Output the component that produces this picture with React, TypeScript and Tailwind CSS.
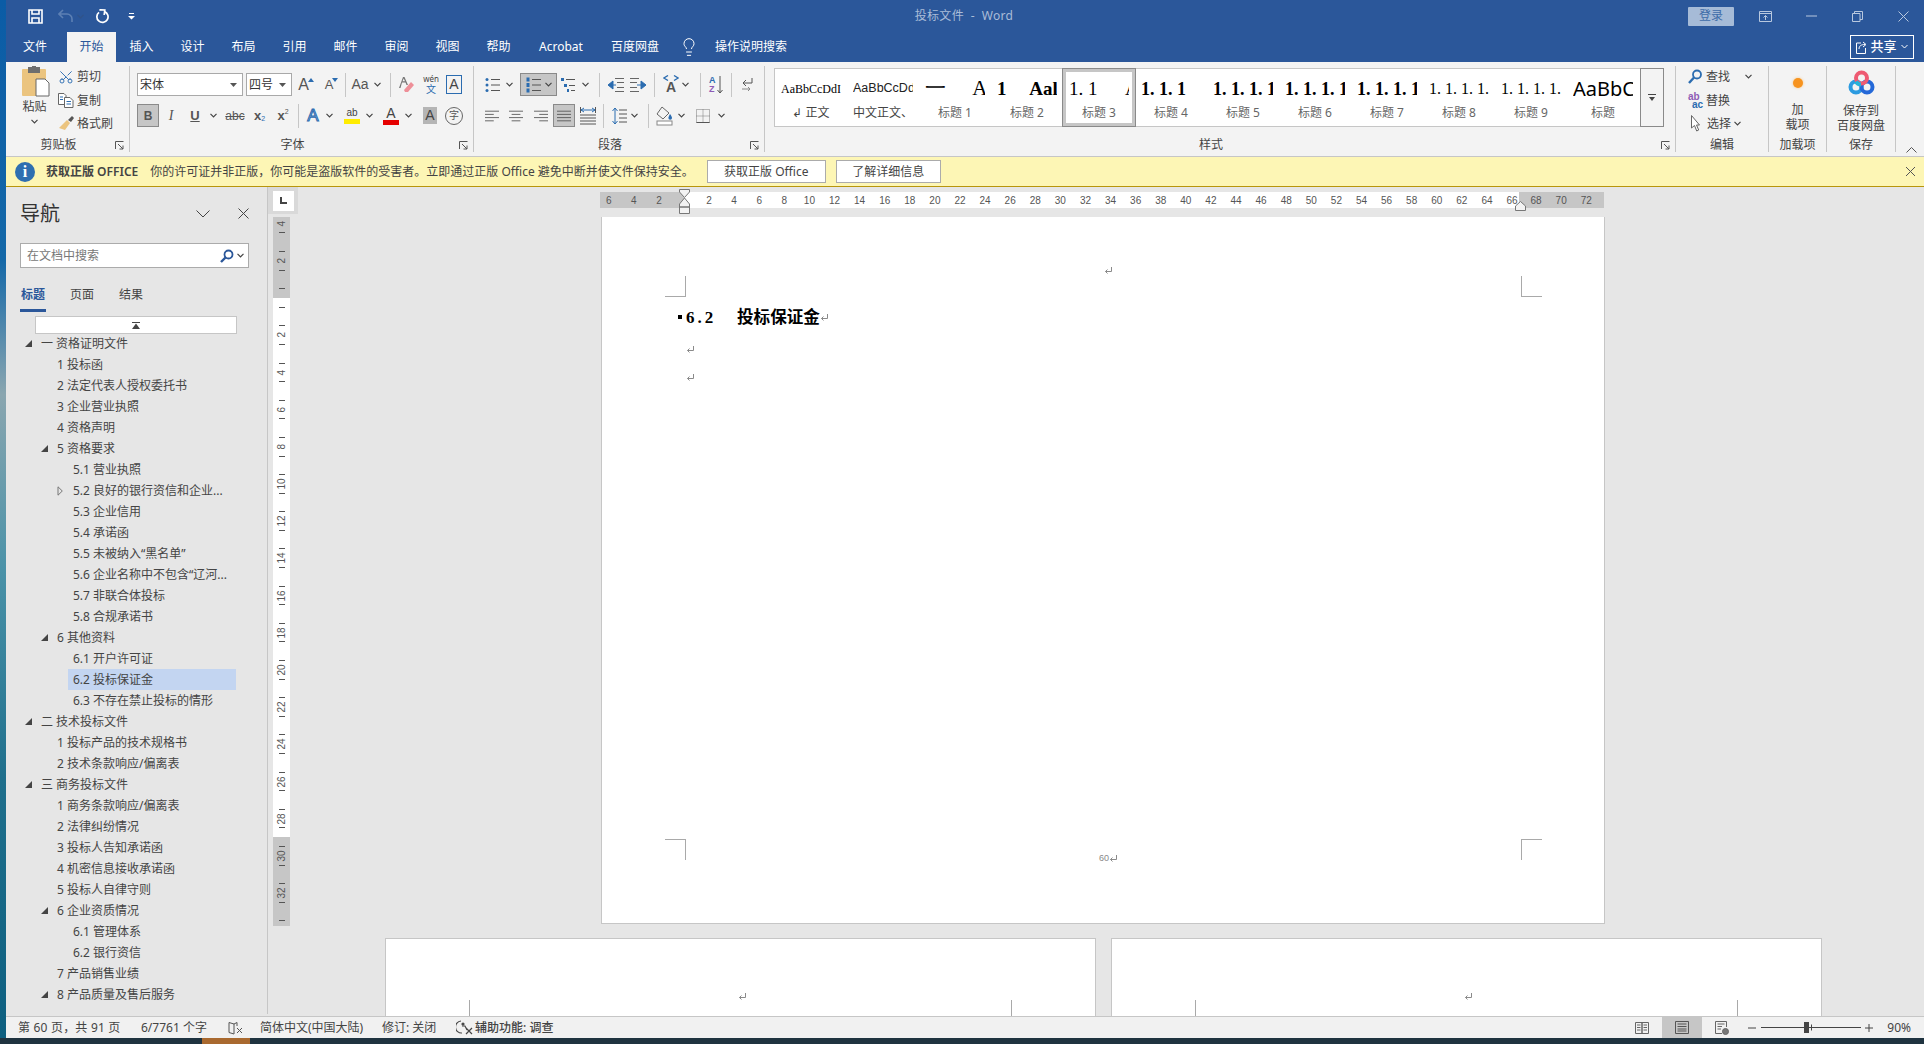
import React from 'react';
import { Scissors, Lightbulb } from 'lucide-react';

const chev = 'flex shrink-0 items-center justify-center';

function Chevron({ className = '' }: { className?: string }) {
  return (
    <span className={`${chev} ${className}`}>
      <svg width="7" height="5" viewBox="0 0 7 5" fill="none" stroke="#444" strokeWidth="1.2">
        <path d="M0.5 0.8 3.5 3.8 6.5 0.8" />
      </svg>
    </span>
  );
}

function Sep({ className = '' }: { className?: string }) {
  return <span className={`h-[24px] w-px shrink-0 bg-[#c6c6c6] ${className}`} />;
}

// four-line paragraph icon, used for align buttons and lists
function Lines({ rows, className = '' }: { rows: [number, number][]; className?: string }) {
  return (
    <svg className={`shrink-0 ${className}`} width="16" height="14" viewBox="0 0 16 14" stroke="#555">
      {rows.map(([a, b], i) => (
        <path key={i} d={`M${a} ${1.5 + i * (11 / (rows.length - 1))}H${b}`} />
      ))}
    </svg>
  );
}

function Launcher() {
  return (
    <svg className="shrink-0" width="9" height="9" viewBox="0 0 9 9" fill="none" stroke="#555">
      <path d="M0.5 8V0.5H8.5M3 3 8 8M8 4.5V8H4.5" />
    </svg>
  );
}

function Group({ className, label, launcher, children }: { className: string; label: string; launcher?: boolean; children: React.ReactNode }) {
  return (
    <div className={`mt-[4px] flex h-[86px] shrink-0 flex-col border-r border-[#c6c6c6] ${className}`}>
      <div className="h-[70px] shrink-0">{children}</div>
      <div className="flex h-[16px] items-center pt-[2px] text-[12px] text-[#444]">
        <span className="flex-1 text-center">{label}</span>
        {launcher && (
          <span className="flex w-[18px] justify-center pr-[2px]">
            <Launcher />
          </span>
        )}
      </div>
    </div>
  );
}

function BlueUp({ down }: { down?: boolean }) {
  return (
    <svg className="mb-[9px] -ml-[1px]" width="6" height="4" viewBox="0 0 6 4" fill="#2b6cb0">
      <path d={down ? 'M0 0H6L3 4Z' : 'M3 0 6 4H0Z'} />
    </svg>
  );
}

function FontGroup() {
  const cell = 'flex shrink-0 items-center justify-center h-[23px] text-[#555]';
  const sans = "font-['Liberation_Sans',sans-serif]";
  return (
    <Group className="w-[344px]" label="字体" launcher>
      <div className="mt-[7px] flex h-[23px] items-center pl-[7px]">
        <div className="flex h-[23px] w-[106px] shrink-0 items-center justify-between border border-[#a9a9a9] bg-white pl-[2px] pr-[5px] text-[12px] text-[#333]">
          宋体
          <svg width="7" height="4" viewBox="0 0 7 4" fill="#555"><path d="M0 0H7L3.5 4Z" /></svg>
        </div>
        <div className="ml-[3px] flex h-[23px] w-[46px] shrink-0 items-center justify-between border border-[#a9a9a9] bg-white pl-[2px] pr-[5px] text-[12px] text-[#333]">
          四号
          <svg width="7" height="4" viewBox="0 0 7 4" fill="#555"><path d="M0 0H7L3.5 4Z" /></svg>
        </div>
        <span className={`${cell} ${sans} w-[28px] text-[16px]`}>A<BlueUp /></span>
        <span className={`${cell} ${sans} w-[23px] text-[13px]`}>A<BlueUp down /></span>
        <Sep className="ml-[2px]" />
        <span className={`${cell} ${sans} ml-[2px] w-[24px] text-[14px]`}>Aa</span>
        <Chevron className="w-[10px]" />
        <Sep className="ml-[8px]" />
        <span className={`${cell} ml-[3px] w-[24px]`}>
          <svg width="17" height="17" viewBox="0 0 17 17">
            <path d="M1 12 5 1H6.500L10 9H8.500L7.500 6.500H4L2.500 12ZM4.500 5.300H7L5.700 2.500Z" fill="#777" />
            <path d="M6 14 13 6l3 3-6 7H7Z" fill="#ee8f98" />
          </svg>
        </span>
        <span className={`${cell} ml-[1px] w-[24px] flex-col`}>
          <span className="h-[10px] text-[8px] leading-[10px] text-[#444]">wén</span>
          <span className="h-[11px] text-[10px] leading-[11px] text-[#2b6cb0]">文</span>
        </span>
        <span className={`ml-[3px] flex h-[19px] w-[16px] shrink-0 items-center justify-center border border-[#2b6cb0] ${sans} text-[14px] text-[#444]`}>A</span>
      </div>
      <div className="mt-[8px] flex h-[23px] items-center pl-[7px]">
        <span className={`${cell} ${sans} w-[22px] border border-[#8a8a8a] bg-[#c6c6c6] text-[12px] font-bold text-[#444]`}>B</span>
        <span className={`${cell} w-[24px] font-['Liberation_Serif',serif] text-[14px] italic`}>I</span>
        <span className={`${cell} ${sans} w-[24px] text-[13px] font-bold underline`}>U</span>
        <Chevron className="w-[12px]" />
        <span className={`${cell} ${sans} ml-[3px] w-[26px] text-[12px] line-through`}>abc</span>
        <span className={`${cell} ${sans} w-[23px] text-[13px] font-bold`}>x<span className="mt-[7px] text-[7px] font-normal text-[#2b6cb0]">2</span></span>
        <span className={`${cell} ${sans} w-[24px] text-[13px] font-bold`}>x<span className="mb-[7px] text-[7px] font-normal text-[#555]">2</span></span>
        <Sep className="ml-[3px]" />
        <span className={`${cell} ${sans} ml-[2px] w-[24px] text-[17px] text-[#bcd6ee] [-webkit-text-stroke:1px_#2b6cb0]`}>A</span>
        <Chevron className="w-[8px]" />
        <span className={`${cell} ml-[7px] w-[24px] flex-col`}>
          <span className={`${sans} text-[10px] leading-[12px] text-[#444]`}>ab</span>
          <span className="h-[5px] w-[16px] bg-[#ffec00]" />
        </span>
        <Chevron className="ml-[1px] w-[8px]" />
        <span className={`${cell} ml-[7px] w-[22px] flex-col`}>
          <span className={`${sans} text-[14px] leading-[14px] text-[#444]`}>A</span>
          <span className="h-[5px] w-[16px] bg-[#e50000]" />
        </span>
        <Chevron className="ml-[2px] w-[8px]" />
        <span className={`${cell} ml-[7px] w-[22px]`}>
          <span className={`${sans} flex h-[17px] w-[14px] items-center justify-center bg-[#b5b5b5] text-[14px] text-[#444]`}>A</span>
        </span>
        <span className={`${cell} ml-[2px] w-[22px]`}>
          <span className="flex h-[18px] w-[18px] items-center justify-center rounded-full border border-[#666] text-[10px] text-[#555]">字</span>
        </span>
      </div>
    </Group>
  );
}

function Bullets({ numbered, className = '' }: { numbered?: boolean; className?: string }) {
  return (
    <svg className={`shrink-0 ${className}`} width="15" height="16" viewBox="0 0 15 16" stroke="#555">
      {[2.5, 8, 13.5].map((y) => (
        <g key={y}>
          {numbered ? <rect x="0.5" y={y - 2} width="3" height="4" fill="#2b6cb0" stroke="none" /> : <circle cx="2" cy={y} r="1.5" fill="#2b6cb0" stroke="none" />}
          <path d={`M6 ${y}H15`} />
        </g>
      ))}
    </svg>
  );
}

function ParagraphGroup() {
  return (
    <Group className="w-[291px]" label="段落" launcher>
      <div className="mt-[7px] flex h-[23px] items-center pl-[11px]">
        <Bullets />
        <Chevron className="ml-[4px] w-[10px]" />
        <div className="ml-[6px] flex h-[23px] w-[37px] shrink-0 items-center justify-center gap-[4px] border border-[#8a8a8a] bg-[#c6c6c6]">
          <Bullets numbered />
          <Chevron className="w-[7px]" />
        </div>
        <svg className="ml-[4px] shrink-0" width="14" height="16" viewBox="0 0 14 16" stroke="#555">
          <rect x="0" y="1" width="3" height="3" fill="#2b6cb0" stroke="none" />
          <path d="M5 2.5H14" />
          <rect x="3" y="7" width="3" height="3" fill="#2b6cb0" stroke="none" />
          <path d="M8 8.5H14" />
          <rect x="6" y="12" width="2" height="3" fill="#2b6cb0" stroke="none" />
          <path d="M10 13.5H14" />
        </svg>
        <Chevron className="ml-[5px] w-[10px]" />
        <Sep className="ml-[9px]" />
        <svg className="ml-[7px] shrink-0" width="17" height="14" viewBox="0 0 17 14">
          <path d="M6 3 1 7l5 4zM5 7H9" fill="#2b6cb0" stroke="#2b6cb0" />
          <path d="M8 .5H17M10 4.5H17M10 9.5H17M8 13.5H17" stroke="#666" />
        </svg>
        <svg className="ml-[6px] shrink-0" width="16" height="14" viewBox="0 0 16 14">
          <path d="M11 3l5 4-5 4zM7 7H12" fill="#2b6cb0" stroke="#2b6cb0" />
          <path d="M0 .5H9M0 4.5H7M0 9.5H7M0 13.5H9" stroke="#666" />
        </svg>
        <Sep className="ml-[8px]" />
        <span className="ml-[8px] flex h-[23px] w-[16px] shrink-0 flex-col items-center justify-center">
          <svg width="16" height="6" viewBox="0 0 16 6" fill="none" stroke="#2b6cb0" strokeWidth="1.3"><path d="M5 .5 1 3l4 2.5M11 .5 15 3l-4 2.5" /></svg>
          <span className="font-['Liberation_Sans',sans-serif] text-[14px] font-bold leading-[13px] text-[#555]">A</span>
        </span>
        <Chevron className="ml-[1px] w-[10px]" />
        <Sep className="ml-[10px]" />
        <span className="ml-[8px] flex h-[23px] w-[16px] shrink-0 items-center">
          <span className="flex flex-col font-['Liberation_Sans',sans-serif] text-[9px] font-bold leading-[9px]">
            <span className="text-[#2b6cb0]">A</span>
            <span className="text-[#8e5bb5]">Z</span>
          </span>
          <svg className="ml-[1px]" width="6" height="18" viewBox="0 0 6 18" fill="none" stroke="#555"><path d="M3 0V17M.5 14 3 17l2.5-3" /></svg>
        </span>
        <Sep className="ml-[6px]" />
        <svg className="ml-[9px] shrink-0" width="12" height="16" viewBox="0 0 12 16" fill="none" stroke="#555">
          <path d="M11 1V6H2M5 3 2 6l3 3" />
          <path d="M1 12H9M7 10l2 2-2 2" stroke="#888" />
        </svg>
      </div>
      <div className="mt-[8px] flex h-[23px] items-center pl-[11px]">
        <Lines className="w-[14px]" rows={[[0, 16], [0, 10], [0, 16], [0, 10]]} />
        <Lines className="ml-[10px] w-[14px]" rows={[[0, 16], [3, 13], [0, 16], [3, 13]]} />
        <Lines className="ml-[11px] w-[14px]" rows={[[0, 16], [6, 16], [0, 16], [6, 16]]} />
        <span className="ml-[5px] flex h-[23px] w-[22px] shrink-0 items-center justify-center border border-[#8a8a8a] bg-[#c6c6c6]">
          <Lines className="w-[14px]" rows={[[0, 16], [0, 16], [0, 16], [0, 16]]} />
        </span>
        <svg className="ml-[5px] shrink-0" width="16" height="18" viewBox="0 0 16 18" fill="none" stroke="#555">
          <path d="M4 1 1 3l3 2M12 1l3 2-3 2M1 3H15" stroke="#2b6cb0" />
          <path d="M0 8H16M0 11H16M0 14H16M0 17H16M.5 0V6M15.5 0V6" />
        </svg>
        <Sep className="ml-[7px]" />
        <svg className="ml-[8px] shrink-0" width="15" height="18" viewBox="0 0 15 18" fill="none">
          <path d="M3 1V17M.5 4 3 1l2.5 3M.5 14 3 17l2.5-3" stroke="#2b6cb0" />
          <path d="M7 3H15M7 7H15M7 11H15M7 15H15" stroke="#555" />
        </svg>
        <Chevron className="ml-[2px] w-[10px]" />
        <Sep className="ml-[9px]" />
        <svg className="ml-[7px] shrink-0" width="17" height="20" viewBox="0 0 17 20" fill="none">
          <path d="M6 1 1 8l6 5 6-6z" stroke="#666" />
          <path d="M14 8c1.5 2 2 3 2 4a1.8 1.8 0 0 1-3.6 0c0-1 .6-2 1.6-4Z" fill="#2b6cb0" />
          <rect x="1" y="15" width="15" height="4" fill="#fff" stroke="#888" />
        </svg>
        <Chevron className="ml-[3px] w-[10px]" />
        <svg className="ml-[10px] shrink-0" width="14" height="14" viewBox="0 0 14 14" fill="none" stroke="#777" strokeDasharray="1 1">
          <path d="M.5 .5H13.5V13.5H.5ZM7 .5V13.5M.5 7H13.5" />
          <path d="M.5 13.5H13.5" strokeDasharray="none" stroke="#555" />
        </svg>
        <Chevron className="ml-[6px] w-[10px]" />
      </div>
    </Group>
  );
}

const serif = "font-['Liberation_Serif',serif]";
const styleItems = [
  { preview: 'AaBbCcDdI', cls: `${serif} text-[12px] text-black`, label: '↲ 正文', dark: true },
  { preview: 'AaBbCcDdI', cls: "font-['Liberation_Sans',sans-serif] text-[12.5px] text-[#222]", label: '中文正文、', dark: true },
  { preview: '一     A', cls: `${serif} text-[21px] text-black`, label: '标题 1' },
  { preview: '1     Aal', cls: `${serif} text-[19px] font-bold text-black`, label: '标题 2' },
  { preview: '1. 1      A', cls: `${serif} text-[19px] text-black`, label: '标题 3', selected: true },
  { preview: '1. 1. 1', cls: `${serif} text-[18px] font-bold text-black`, label: '标题 4' },
  { preview: '1. 1. 1. 1', cls: `${serif} text-[18px] font-bold text-black`, label: '标题 5' },
  { preview: '1. 1. 1. 1', cls: `${serif} text-[18px] font-bold text-black`, label: '标题 6' },
  { preview: '1. 1. 1. 1', cls: `${serif} text-[18px] font-bold text-black`, label: '标题 7' },
  { preview: '1. 1. 1. 1.', cls: `${serif} text-[16px] text-black`, label: '标题 8' },
  { preview: '1. 1. 1. 1.', cls: `${serif} text-[16px] text-black`, label: '标题 9' },
  { preview: 'AaBbCc', cls: "font-['Noto_Sans',sans-serif] text-[20px] text-black", label: '标题' },
];

function StylesGroup() {
  return (
    <Group className="w-[911px]" label="样式" launcher>
      <div className="ml-[9px] mt-[2px] flex h-[59px] w-[890px] border border-[#c6c6c6] bg-white">
        {styleItems.map((s) => (
          <div
            key={s.label}
            className={`flex h-[57px] w-[72px] shrink-0 flex-col items-center ${s.selected ? 'border-[3px] border-[#c6c6c6] outline outline-1 outline-[#8a8a8a]' : ''}`}
          >
            <div className={`flex h-[33px] w-[60px] shrink-0 items-center overflow-hidden whitespace-pre leading-none ${s.selected ? '' : 'mt-[3px]'} ${s.cls}`}>
              {s.preview}
            </div>
            <div className={`text-[12px] leading-[16px] ${s.dark ? 'text-[#444]' : 'text-[#666]'}`}>{s.label}</div>
          </div>
        ))}
        <div className="ml-[1px] flex h-[59px] w-[24px] shrink-0 -translate-y-px items-center justify-center border border-[#8a8a8a] bg-[#f3f3f3]">
          <svg width="8" height="8" viewBox="0 0 8 8" fill="#444"><path d="M0 0H8V1H0ZM1 3H7L4 7Z" /></svg>
        </div>
      </div>
    </Group>
  );
}

function EditGroup() {
  const row = 'flex h-[23px] items-center text-[12px] text-[#444]';
  return (
    <Group className="w-[93px]" label="编辑">
      <div className="pl-[12px]">
        <div className={`${row} mt-[-1px]`}>
          <svg className="mr-[4px]" width="14" height="15" viewBox="0 0 14 15" fill="none" stroke="#2b6cb0" strokeWidth="1.8">
            <circle cx="9" cy="5.5" r="4" />
            <path d="M6 8.5 1 14" strokeWidth="2.4" />
          </svg>
          查找
          <Chevron className="ml-[15px] w-[7px]" />
        </div>
        <div className={`${row} mt-[1px]`}>
          <span className="mr-[3px] flex w-[15px] flex-col font-['Liberation_Sans',sans-serif] text-[10px] font-bold leading-[8px]">
            <span className="text-[#8e5bb5]">ab</span>
            <span className="ml-[4px] text-[#2b6cb0]">ac</span>
          </span>
          替换
        </div>
        <div className={row}>
          <svg className="mb-[1px] ml-[3px] mr-[7px]" width="9" height="17" viewBox="0 0 9 17" fill="#fff" stroke="#666">
            <path d="M.5 .5V13l3-2.5 2.2 5.5 2-1-2.2-5H8.5Z" />
          </svg>
          选择
          <Chevron className="ml-[2px] w-[8px]" />
        </div>
      </div>
    </Group>
  );
}

function BaiduIcon() {
  return (
    <svg width="27" height="26" viewBox="0 0 27 26" fill="none" strokeWidth="4">
      <circle cx="8" cy="17" r="5.5" stroke="#2c9be0" />
      <circle cx="19" cy="17" r="5.5" stroke="#2468d8" />
      <circle cx="13.5" cy="8" r="5.5" stroke="#ee5a72" />
      <path d="M8 11.5a5.5 5.5 0 0 0 5 3" stroke="#26b3d8" />
    </svg>
  );
}

function TitleBar() {
  return (
    <div className="flex h-[32px] shrink-0 items-center bg-[#2b579a]">
      <svg className="ml-[22px] shrink-0" width="15" height="15" viewBox="0 0 15 15" fill="none" stroke="#fff" strokeWidth="1.6">
        <path d="M1 1H14V14H1ZM4 1V5H11V1M4 14V9H11V14" />
      </svg>
      <svg className="ml-[15px] shrink-0" width="15" height="14" viewBox="0 0 15 14" fill="none" stroke="#5d80b4" strokeWidth="1.6">
        <path d="M5 1 1 5l4 4M1 5H9a5 5 0 0 1 5 5v3" />
      </svg>
      <Chevron className="ml-[3px] w-[8px] opacity-20" />
      <svg className="ml-[12px] shrink-0" width="14" height="15" viewBox="0 0 14 15" fill="none" stroke="#fff" strokeWidth="1.7">
        <path d="M8.5 2.6A5.6 5.6 0 1 1 3 3.4" />
        <path d="M3.4 .8 8.8 1 8.2 6" />
      </svg>
      <svg className="ml-[18px] shrink-0" width="7" height="7" viewBox="0 0 7 7" fill="#fff"><path d="M1 0H6V1H1ZM0 3H7L3.5 6.5Z" /></svg>
      <div className="ml-[776px] w-[106px] shrink-0 text-center text-[12px] tracking-[0.3px] text-[#a9bcd8]">投标文件&nbsp; -&nbsp; Word</div>
      <div className="ml-auto flex items-center">
        <div className="flex h-[19px] w-[46px] items-center justify-center rounded-[1px] bg-[#a6bbd7] text-[12px] text-[#3e6ca8]">登录</div>
        <svg className="ml-[25px]" width="13" height="11" viewBox="0 0 13 11" fill="none" stroke="#b8c8df">
          <path d="M.5 .5H12.5V10.5H.5ZM.5 2.5H12.5M6.5 9V4.5M4.5 6.5l2-2 2 2" />
        </svg>
        <svg className="ml-[34px]" width="11" height="2" viewBox="0 0 11 2" stroke="#b8c8df"><path d="M0 1H11" /></svg>
        <svg className="ml-[35px]" width="11" height="11" viewBox="0 0 11 11" fill="none" stroke="#b8c8df">
          <path d="M.5 2.5H8V10.5H.5ZM2.5 2.5V.5H10.5V8.5H8" />
        </svg>
        <svg className="ml-[35px] mr-[15px]" width="11" height="11" viewBox="0 0 11 11" fill="none" stroke="#b8c8df"><path d="M.5 .5 10.5 10.5M10.5 .5 .5 10.5" /></svg>
      </div>
    </div>
  );
}

function TabBar() {
  const tab = 'flex h-[30px] shrink-0 items-center justify-center text-[12px] text-white';
  const names = ['插入', '设计', '布局', '引用', '邮件', '审阅', '视图', '帮助'];
  return (
    <div className="flex h-[30px] shrink-0 items-center bg-[#2b579a]">
      <div className={`${tab} w-[61px] pr-[3px]`}>文件</div>
      <div className="flex h-[30px] w-[49px] shrink-0 items-center justify-center bg-[#f3f3f3] text-[12px] text-[#2b579a]">开始</div>
      {names.map((n) => (
        <div key={n} className={`${tab} w-[51px]`}>{n}</div>
      ))}
      <div className={`${tab} w-[74px]`}>Acrobat</div>
      <div className={`${tab} w-[74px]`}>百度网盘</div>
      <Lightbulb className="ml-[7px] shrink-0" size={20} color="#fff" strokeWidth={1.2} />
      <div className="ml-[16px] text-[12px] text-white">操作说明搜索</div>
      <div className="ml-auto mb-[1px] mr-[10px] flex h-[24px] w-[64px] items-center justify-center gap-[3px] border border-white text-[13px] font-medium text-white">
        <svg width="11" height="14" viewBox="0 0 11 14" fill="none" stroke="#fff">
          <path d="M5 3H.5V13.5H9.5V8M3 9c0-3 2-4.500 6-4.500M7 2l3 2.500-3 2.500" />
        </svg>
        共享
        <svg className="ml-[1px]" width="7" height="5" viewBox="0 0 7 5" fill="none" stroke="#fff"><path d="M.5 1 3.500 4 6.500 1" /></svg>
      </div>
    </div>
  );
}

function Ribbon() {
  return (
    <div className="relative flex h-[95px] shrink-0 border-b border-[#c6c6c6] bg-[#f3f3f3]">
      <Group className="w-[124px]" label="剪贴板" launcher>
        <div className="flex">
          <div className="ml-[5px] flex w-[47px] shrink-0 flex-col items-center text-[12px] text-[#444]">
            <svg className="ml-[3px]" width="28" height="31" viewBox="0 0 28 31">
              <rect x="0" y="3" width="24" height="27" rx="1" fill="#ebc47f" />
              <rect x="6" y="1" width="12" height="6" fill="#6e6e6e" />
              <rect x="10" y="0" width="4" height="3" fill="#6e6e6e" />
              <path d="M14 13H23L27 17V30H14Z" fill="#fff" stroke="#666" />
            </svg>
            <span className="mt-[2px] leading-[16px]">粘贴</span>
            <Chevron className="mt-[3px] h-[6px] w-[8px]" />
          </div>
          <div className="flex flex-col text-[12px] text-[#444]">
            <div className="flex h-[23px] items-center gap-[3px] mt-[-1px]">
              <span className="flex w-[16px] justify-center">
                <Scissors className="-rotate-90" size={16} color="#2b6cb0" strokeWidth={1.4} />
              </span>
              剪切
            </div>
            <div className="mt-[1px] flex h-[23px] items-center gap-[3px]">
              <svg width="16" height="15" viewBox="0 0 16 15" fill="#fff" stroke="#666">
                <path d="M.5 .5H6L8 2.500V11.500H.5Z" />
                <path d="M6.500 4.500H12L15 7.500V14.500H6.500Z" />
                <path d="M8.500 8.500H13M8.500 11H13M2 4H5M2 6.500H5" stroke="#2b6cb0" />
              </svg>
              复制
            </div>
            <div className="flex h-[23px] items-center gap-[3px]">
              <svg width="16" height="15" viewBox="0 0 16 15">
                <path d="M9 4 12 7 7 14 1 12Z" fill="#ebc47f" />
                <path d="M10 4 14 0l2 2-3 4Z" fill="#555" />
              </svg>
              格式刷
            </div>
          </div>
        </div>
      </Group>
      <FontGroup />
      <ParagraphGroup />
      <StylesGroup />
      <EditGroup />
      <Group className="w-[58px]" label="加载项">
        <div className="flex flex-col items-center pt-[6px] text-center text-[12px] leading-[15px] text-[#444]">
          <span className="mt-[6px] h-[10px] w-[10px] rounded-full bg-[#f7931e] shadow-[0_0_3px_#f7c98a]" />
          <span className="mt-[14px]">加</span>
          <span>载项</span>
        </div>
      </Group>
      <Group className="w-[69px]" label="保存">
        <div className="flex flex-col items-center pt-[4px] text-center text-[12px] leading-[15px] text-[#444]">
          <BaiduIcon />
          <span className="mt-[7px]">保存到</span>
          <span>百度网盘</span>
        </div>
      </Group>
      <svg className="absolute right-[7px] top-[85px]" width="11" height="6" viewBox="0 0 11 6" fill="none" stroke="#555">
        <path d="M.5 5.500 5.500 .5 10.500 5.500" />
      </svg>
    </div>
  );
}

function MessageBar() {
  return (
    <div className="flex h-[30px] shrink-0 items-center border-b border-[#b8960c] bg-[#fdf6b5] text-[12px] text-[#444]">
      <span className="ml-[9px] flex h-[20px] w-[20px] shrink-0 items-center justify-center rounded-full bg-[#2f6fb0] font-['Liberation_Serif',serif] text-[16px] font-bold text-white">i</span>
      <span className="ml-[11px] font-semibold">获取正版 OFFICE</span>
      <span className="ml-[12px]">你的许可证并非正版，你可能是盗版软件的受害者。立即通过正版 Office 避免中断并使文件保持安全。</span>
      <span className="ml-[13px] flex h-[23px] w-[119px] shrink-0 items-center justify-center border border-[#ababab] bg-white">获取正版 Office</span>
      <span className="ml-[10px] flex h-[23px] w-[105px] shrink-0 items-center justify-center border border-[#ababab] bg-white">了解详细信息</span>
      <svg className="ml-auto mr-[9px]" width="9" height="9" viewBox="0 0 9 9" stroke="#555"><path d="M0 0 9 9M9 0 0 9" /></svg>
    </div>
  );
}

type Arrow = 'open' | 'closed' | undefined;
const tree: { t: string; l: 1 | 2 | 3; a?: Arrow; on?: boolean }[] = [
  { t: '一 资格证明文件', l: 1, a: 'open' },
  { t: '1 投标函', l: 2 },
  { t: '2 法定代表人授权委托书', l: 2 },
  { t: '3 企业营业执照', l: 2 },
  { t: '4 资格声明', l: 2 },
  { t: '5 资格要求', l: 2, a: 'open' },
  { t: '5.1 营业执照', l: 3 },
  { t: '5.2 良好的银行资信和企业...', l: 3, a: 'closed' },
  { t: '5.3 企业信用', l: 3 },
  { t: '5.4 承诺函', l: 3 },
  { t: '5.5 未被纳入“黑名单”', l: 3 },
  { t: '5.6 企业名称中不包含“辽河...', l: 3 },
  { t: '5.7 非联合体投标', l: 3 },
  { t: '5.8 合规承诺书', l: 3 },
  { t: '6 其他资料', l: 2, a: 'open' },
  { t: '6.1 开户许可证', l: 3 },
  { t: '6.2 投标保证金', l: 3, on: true },
  { t: '6.3 不存在禁止投标的情形', l: 3 },
  { t: '二 技术投标文件', l: 1, a: 'open' },
  { t: '1 投标产品的技术规格书', l: 2 },
  { t: '2 技术条款响应/偏离表', l: 2 },
  { t: '三 商务投标文件', l: 1, a: 'open' },
  { t: '1 商务条款响应/偏离表', l: 2 },
  { t: '2 法律纠纷情况', l: 2 },
  { t: '3 投标人告知承诺函', l: 2 },
  { t: '4 机密信息接收承诺函', l: 2 },
  { t: '5 投标人自律守则', l: 2 },
  { t: '6 企业资质情况', l: 2, a: 'open' },
  { t: '6.1 管理体系', l: 3 },
  { t: '6.2 银行资信', l: 3 },
  { t: '7 产品销售业绩', l: 2 },
  { t: '8 产品质量及售后服务', l: 2, a: 'open' },
];
const indent = { 1: 'pl-[18px]', 2: 'pl-[34px]', 3: 'pl-[50px]' };

function NavPane() {
  return (
    <div className="mb-[2px] flex w-[262px] shrink-0 flex-col border-r border-[#c6c6c6] bg-[#e6e6e6]">
      <div className="flex h-[52px] shrink-0 items-center pl-[14px] pt-[1px]">
        <span className="text-[20px] text-[#333]">导航</span>
        <svg className="ml-[136px]" width="14" height="8" viewBox="0 0 14 8" fill="none" stroke="#444"><path d="M.5 .5 7 7 13.500 .5" /></svg>
        <svg className="ml-[28px]" width="11" height="11" viewBox="0 0 11 11" fill="none" stroke="#444"><path d="M.5 .5 10.500 10.500M10.500 .5 .5 10.500" /></svg>
      </div>
      <div className="ml-[14px] mt-[4px] flex h-[25px] w-[229px] shrink-0 items-center border border-[#ababab] bg-white pl-[6px] pr-[4px] text-[12px] text-[#777]">
        在文档中搜索
        <svg className="ml-auto" width="14" height="14" viewBox="0 0 14 14" fill="none" stroke="#2b579a" strokeWidth="1.8">
          <circle cx="8.500" cy="5.500" r="4" />
          <path d="M5.500 8.500 1 13" strokeWidth="2.400" />
        </svg>
        <Chevron className="ml-[3px] w-[7px]" />
      </div>
      <div className="ml-[14px] mt-[16px] flex h-[22px] shrink-0 items-center text-[12px] text-[#444]">
        <span className="w-[49px] pl-[1px] font-semibold text-[#2b579a]">标题</span>
        <span className="w-[49px] pl-[1px]">页面</span>
        <span className="pl-[1px]">结果</span>
      </div>
      <div className="ml-[14px] mt-[3px] h-[3px] w-[26px] shrink-0 bg-[#2b579a]" />
      <div className="ml-[29px] mt-[4px] flex h-[18px] w-[202px] shrink-0 items-center justify-center border border-[#c6c6c6] bg-white">
        <svg width="8" height="7" viewBox="0 0 8 7" fill="#444"><path d="M0 0H8V1H0ZM4 1.500 8 7H0Z" /></svg>
      </div>
      <div className="-mt-px flex flex-col text-[12px] text-[#444]">
        {tree.map((r, i) => (
          <div key={i} className={`flex h-[21px] shrink-0 items-center ${indent[r.l]}`}>
            <span className="flex w-[12px] shrink-0 pl-[1px]">
              {r.a === 'open' && <svg width="7" height="7" viewBox="0 0 7 7" fill="#444"><path d="M7 0V7H0Z" /></svg>}
              {r.a === 'closed' && <svg width="6" height="10" viewBox="0 0 6 10" fill="none" stroke="#777"><path d="M1 .8 5.300 5 1 9.200Z" /></svg>}
            </span>
            <span className={`flex h-[21px] items-center whitespace-pre pl-[5px] ${r.on ? 'w-[168px] bg-[#c3d5f1]' : ''}`}>{r.t}</span>
          </div>
        ))}
      </div>
    </div>
  );
}

const vNums = ['4', '2', '', '2', '4', '6', '8', '10', '12', '14', '16', '18', '20', '22', '24', '26', '28', '30', '32', ''];

function VRuler() {
  return (
    <div className="flex w-[30px] shrink-0 flex-col">
      <div className="flex h-[27px] w-[30px] items-center justify-center bg-[#d9d9d9]">
        <span className="flex h-[20px] w-[21px] items-center justify-center bg-white">
          <svg width="7" height="7" viewBox="0 0 7 7" fill="#444"><path d="M0 0H2V5H7V7H0Z" /></svg>
        </span>
      </div>
      <div className="ml-[5px] mt-[3px] h-[709px] w-[17px] overflow-hidden bg-[linear-gradient(to_bottom,#c6c6c6_0,#c6c6c6_81px,#fff_81px,#fff_620px,#c6c6c6_620px,#c6c6c6_709px)]">
        <div className="mt-[-12px] flex flex-col items-center">
          {vNums.map((n, i) => (
            <div key={i} className="flex h-[37.2px] shrink-0 flex-col items-center pt-[8.8px]">
              <span className="h-px w-[6px] shrink-0 bg-[#555]" />
              <span className="flex h-[17.6px] shrink-0 items-center justify-center font-['Liberation_Sans',sans-serif] text-[10px] leading-none text-[#555] [writing-mode:vertical-rl] rotate-180">{n}</span>
              <span className="h-px w-[6px] shrink-0 bg-[#555]" />
            </div>
          ))}
        </div>
      </div>
    </div>
  );
}

const leftNums = ['6', '4', '2'];
const midNums = Array.from({ length: 33 }, (_, i) => String((i + 1) * 2));
const rightNums = ['68', '70', '72'];

function HRuler() {
  const cell = 'w-[25.1px] shrink-0 text-center';
  return (
    <div className="relative ml-[302px] flex h-[16px] w-[1004px] shrink-0 items-center font-['Liberation_Sans',sans-serif] text-[10px] text-[#555]">
      <div className="flex h-[16px] w-[84px] shrink-0 items-center justify-end bg-[#c6c6c6] pr-[12.5px]">
        {leftNums.map((n) => <span key={n} className={cell}>{n}</span>)}
      </div>
      <div className="flex h-[16px] w-[835px] shrink-0 items-center bg-white pl-[12.5px]">
        {midNums.map((n) => <span key={n} className={cell}>{n}</span>)}
      </div>
      <div className="flex h-[16px] w-[85px] shrink-0 items-center bg-[#c6c6c6] pl-[4.5px]">
        {rightNums.map((n) => <span key={n} className={cell}>{n}</span>)}
      </div>
      <svg className="absolute left-[79px] top-[-3px]" width="11" height="27" viewBox="0 0 11 27" fill="#f3f3f3" stroke="#777">
        <path d="M.5 .5H10.500V3L5.500 8.500.5 3ZM5.500 9 10.500 15V18H.5V15ZM.5 18H10.500V24.500H.5Z" />
      </svg>
      <svg className="absolute left-[915px] top-[9px]" width="11" height="10" viewBox="0 0 11 10" fill="#f3f3f3" stroke="#777">
        <path d="M5.500 .5 10.500 5V9.500H.5V5Z" />
      </svg>
    </div>
  );
}

function ReturnMark({ className = '' }: { className?: string }) {
  return (
    <svg className={`shrink-0 ${className}`} width="9" height="8" viewBox="0 0 8 8" fill="none" stroke="#8a8a8a">
      <path d="M7 0V4.500H1M3 2.500 1 4.500 3 6.500" />
    </svg>
  );
}

function CropMark({ className }: { className: string }) {
  return <span className={`absolute h-[21px] w-[21px] border-[#a9a9a9] ${className}`} />;
}

function Document() {
  return (
    <div className="flex min-w-0 flex-1 flex-col pt-[5px]">
      <HRuler />
      <div className="relative ml-[303px] mt-[9px] flex h-[707px] w-[1004px] shrink-0 flex-col border-x border-b border-[#c6c6c6] bg-white">
        <CropMark className="left-[63px] top-[59px] border-b border-r" />
        <CropMark className="left-[919px] top-[59px] border-b border-l" />
        <CropMark className="left-[63px] top-[622px] border-r border-t" />
        <CropMark className="left-[919px] top-[622px] border-l border-t" />
        <ReturnMark className="ml-[502px] mt-[50px]" />
        <div className="ml-[76px] mt-[32px] flex h-[20px] items-center text-[16.6px] font-bold leading-none text-black">
          <span className="mr-[4px] h-[4px] w-[4px] bg-black" />
          <span className="w-[51px] font-['Liberation_Serif',serif] text-[17px] tracking-[3px]">6.2</span>
          <span>投标保证金</span>
          <ReturnMark className="mt-[1px]" />
        </div>
        <ReturnMark className="ml-[84px] mt-[19px]" />
        <ReturnMark className="ml-[84px] mt-[20px]" />
        <div className="ml-[497px] mt-auto mb-[60px] flex items-center font-['Liberation_Sans',sans-serif] text-[9px] leading-none text-[#888]">
          60<ReturnMark />
        </div>
      </div>
      <div className="ml-[87px] mt-[14px] flex min-h-0 flex-1 gap-[15px]">
        {[0, 1].map((p) => (
          <div key={p} className="relative flex w-[711px] shrink-0 flex-col items-center border-x border-t border-[#c6c6c6] bg-white pt-[54px]">
            <ReturnMark className="ml-[4px]" />
            <span className="absolute bottom-0 left-[83px] h-[16px] w-px bg-[#a9a9a9]" />
            <span className="absolute bottom-0 left-[625px] h-[16px] w-px bg-[#a9a9a9]" />
          </div>
        ))}
      </div>
    </div>
  );
}

function StatusBar() {
  return (
    <div className="flex h-[22px] shrink-0 items-center border-t border-[#c6c6c6] bg-[#f1f1f1] pl-[12px] text-[12px] text-[#444]">
      <span className="w-[123px] shrink-0 tracking-[0.2px]">第 60 页，共 91 页</span>
      <span className="w-[87px] shrink-0">6/7761 个字</span>
      <span className="w-[32px] shrink-0">
        <svg width="15" height="14" viewBox="0 0 15 14" fill="none" stroke="#555">
          <path d="M1 1.500 6 3V13L1 11.500ZM6 3 9 1.500V5" />
          <path d="M9 7 14 12M14 7 9 12" stroke="#555" />
        </svg>
      </span>
      <span className="w-[122px] shrink-0">简体中文(中国大陆)</span>
      <span className="w-[74px] shrink-0">修订: 关闭</span>
      <span className="w-[19px] shrink-0">
        <svg width="17" height="16" viewBox="0 0 17 16" fill="none" stroke="#444" strokeWidth="1.2">
          <path d="M5 1a6 6 0 0 0 1 12" />
          <circle cx="7" cy="4" r="1" fill="#444" />
          <path d="M6 6h3l2 4M10 8 16 14M16 8 10 14" />
        </svg>
      </span>
      <span className="font-medium">辅助功能: 调查</span>
      <div className="ml-auto flex h-[21px] items-center pr-[13px]">
        <svg width="14" height="14" viewBox="0 0 14 14" fill="none" stroke="#666">
          <path d="M.5 1.500H7V12.500H.5ZM7 1.500H13.500V12.500H7ZM2 4H5.500M2 6.500H5.500M2 9H5.500M8.500 4H12M8.500 6.500H12M8.500 9H12" />
        </svg>
        <span className="ml-[13px] flex h-[21px] w-[40px] items-center justify-center bg-[#c6c6c6]">
          <svg width="14" height="13" viewBox="0 0 14 13" fill="none" stroke="#555">
            <path d="M.5 .5H13.500V12.500H.5ZM2.500 3H11.500M2.500 5.500H11.500M2.500 8H11.500M2.500 10H11.500" />
          </svg>
        </span>
        <svg className="ml-[13px]" width="14" height="14" viewBox="0 0 14 14" fill="none" stroke="#666">
          <path d="M7 12.500H.5V.5H11.500V6M2.500 3H9.500M2.500 5.500H7M2.500 8H6" />
          <circle cx="10.500" cy="10.500" r="3" fill="#777" />
        </svg>
        <svg className="ml-[19px]" width="8" height="2" viewBox="0 0 8 2" stroke="#444"><path d="M0 1H8" /></svg>
        <svg className="ml-[5px]" width="100" height="13" viewBox="0 0 100 13">
          <path d="M0 6.500H100" stroke="#444" />
          <path d="M50.500 3.500V9.500" stroke="#444" />
          <rect x="43" y="1" width="5" height="11" fill="#444" />
        </svg>
        <svg className="ml-[4px]" width="8" height="8" viewBox="0 0 8 8" stroke="#444"><path d="M0 4H8M4 0V8" /></svg>
        <span className="ml-[14px]">90%</span>
      </div>
    </div>
  );
}

export default function App() {
  return (
    <div className="flex h-[1044px] w-[1924px] flex-col overflow-hidden font-['Noto_Sans','Noto_Sans_CJK_SC',sans-serif]">
      <div className="flex min-h-0 flex-1">
        <div className="w-[6px] shrink-0 bg-[linear-gradient(to_bottom,#0b5ca6_0%,#1468a8_25%,#8aa6b0_38%,#4a92a8_55%,#1f6f8c_75%,#0d5f80_100%)]" />
        <div className="flex min-w-0 flex-1 flex-col">
          <TitleBar />
          <TabBar />
          <Ribbon />
          <MessageBar />
          <div className="flex min-h-0 flex-1 overflow-hidden bg-[#e6e6e6]">
            <NavPane />
            <VRuler />
            <Document />
          </div>
          <StatusBar />
        </div>
      </div>
      <div className="flex h-[6px] shrink-0 bg-[#1f3340]">
        <div className="ml-[202px] w-[48px] bg-[#a9692f]" />
      </div>
    </div>
  );
}
